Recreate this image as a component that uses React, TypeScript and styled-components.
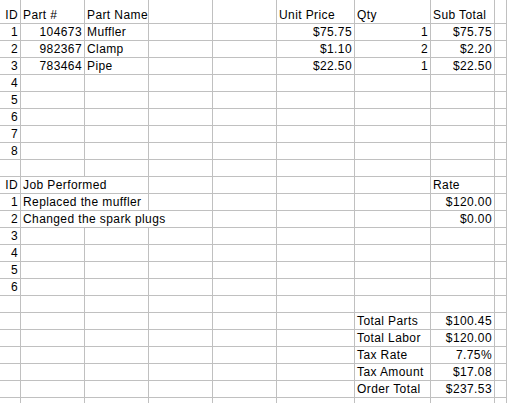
import React from "react";
import styled, { createGlobalStyle } from "styled-components";

const GlobalStyle = createGlobalStyle`
  html, body {
    margin: 0;
    padding: 0;
    background: #ffffff;
    overflow: hidden;
  }
  body {
    font-family: "Liberation Sans", Arial, sans-serif;
    font-size: 12px;
    color: #000000;
  }
`;

const Sheet = styled.div`
  display: grid;
  grid-template-columns: 21px 64px 64px 64px 64px 78px 76px 64px 1fr;
  grid-template-rows: 24px repeat(25, 17px);
  width: 100%;
  height: 403px;
  overflow: hidden;
  background: #ffffff;
`;

type Align = "left" | "right";

const Cell = styled.div<{ $align: Align; $span: number }>`
  box-sizing: border-box;
  grid-column: span ${(p) => p.$span};
  display: flex;
  align-items: flex-end;
  justify-content: ${(p) => (p.$align === "right" ? "flex-end" : "flex-start")};
  padding: ${(p) => (p.$align === "right" ? "0 2px 0 0" : "0 0 0 2px")};
  border-right: 1px solid #c0c0c0;
  border-bottom: 1px solid #c0c0c0;
  white-space: nowrap;
  overflow: hidden;
  line-height: 16px;
  letter-spacing: 0.4px;
  font-family: "Liberation Sans", Arial, sans-serif;
  font-size: 12px;
  color: #000000;
`;

type CellData = { text?: string; align?: Align; span?: number };

const L = (text: string, span = 1): CellData => ({ text, align: "left", span });
const R = (text: string): CellData => ({ text, align: "right" });
const E: CellData = {};

const COLS = 9;

const rows: CellData[][] = [
  [R("ID"), L("Part #"), L("Part Name"), E, E, L("Unit Price"), L("Qty"), L("Sub Total"), E],
  [R("1"), R("104673"), L("Muffler"), E, E, R("$75.75"), R("1"), R("$75.75"), E],
  [R("2"), R("982367"), L("Clamp"), E, E, R("$1.10"), R("2"), R("$2.20"), E],
  [R("3"), R("783464"), L("Pipe"), E, E, R("$22.50"), R("1"), R("$22.50"), E],
  [R("4")],
  [R("5")],
  [R("6")],
  [R("7")],
  [R("8")],
  [],
  [R("ID"), L("Job Performed", 2), E, E, E, E, L("Rate"), E],
  [R("1"), L("Replaced the muffler", 2), E, E, E, E, R("$120.00"), E],
  [R("2"), L("Changed the spark plugs", 3), E, E, E, R("$0.00"), E],
  [R("3")],
  [R("4")],
  [R("5")],
  [R("6")],
  [],
  [E, E, E, E, E, E, L("Total Parts"), R("$100.45"), E],
  [E, E, E, E, E, E, L("Total Labor"), R("$120.00"), E],
  [E, E, E, E, E, E, L("Tax Rate"), R("7.75%"), E],
  [E, E, E, E, E, E, L("Tax Amount"), R("$17.08"), E],
  [E, E, E, E, E, E, L("Order Total"), R("$237.53"), E],
  [],
  [],
  [],
];

function fillRow(row: CellData[]): CellData[] {
  const used = row.reduce((n, c) => n + (c.span ?? 1), 0);
  const out = [...row];
  for (let i = used; i < COLS; i++) out.push(E);
  return out;
}

export default function App() {
  return (
    <>
      <GlobalStyle />
      <Sheet>
        {rows.map((row, r) =>
          fillRow(row).map((c, i) => (
            <Cell key={`${r}-${i}`} $align={c.align ?? "left"} $span={c.span ?? 1}>
              {c.text ?? ""}
            </Cell>
          ))
        )}
      </Sheet>
    </>
  );
}
